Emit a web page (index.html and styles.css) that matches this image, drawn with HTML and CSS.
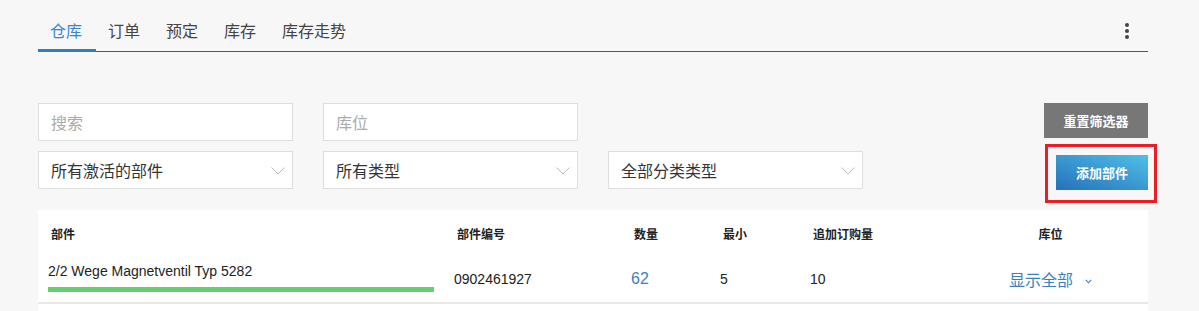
FILE: index.html
```html
<!DOCTYPE html>
<html lang="zh">
<head>
<meta charset="utf-8">
<title>仓库</title>
<link rel="stylesheet" href="styles.css">
</head>
<body>
<div class="page">
  <nav class="tabs">
    <a class="tab active">仓库</a>
    <a class="tab">订单</a>
    <a class="tab">预定</a>
    <a class="tab">库存</a>
    <a class="tab">库存走势</a>
    <span class="kebab"><i></i><i></i><i></i></span>
  </nav>

  <div class="filters">
    <div class="field"><span class="placeholder">搜索</span></div>
    <div class="field"><span class="placeholder">库位</span></div>
    <div class="spacer"></div>
    <button class="btn btn-gray">重置筛选器</button>

    <div class="field select"><span>所有激活的部件</span>
      <svg class="chev" width="14" height="8" viewBox="0 0 14 8"><polyline points="0.5,0.5 7,7 13.5,0.5" fill="none" stroke="#bdbdbd" stroke-width="1"/></svg>
    </div>
    <div class="field select"><span>所有类型</span>
      <svg class="chev" width="14" height="8" viewBox="0 0 14 8"><polyline points="0.5,0.5 7,7 13.5,0.5" fill="none" stroke="#bdbdbd" stroke-width="1"/></svg>
    </div>
    <div class="field select"><span>全部分类类型</span>
      <svg class="chev" width="14" height="8" viewBox="0 0 14 8"><polyline points="0.5,0.5 7,7 13.5,0.5" fill="none" stroke="#bdbdbd" stroke-width="1"/></svg>
    </div>
    <div class="add-wrap">
      <button class="btn btn-blue">添加部件</button>
      <span class="highlight"></span>
    </div>
  </div>

  <div class="table">
    <div class="row head">
      <div class="cell">部件</div>
      <div class="cell">部件编号</div>
      <div class="cell">数量</div>
      <div class="cell">最小</div>
      <div class="cell">追加订购量</div>
      <div class="cell center">库位</div>
    </div>
    <div class="row data">
      <div class="cell name">
        <div class="part-name">2/2 Wege Magnetventil Typ 5282</div>
        <div class="bar"></div>
      </div>
      <div class="cell">0902461927</div>
      <div class="cell qty">62</div>
      <div class="cell">5</div>
      <div class="cell">10</div>
      <div class="cell center"><span class="show-all">显示全部</span><svg class="small-chev" width="7" height="5" viewBox="0 0 7 5"><polyline points="0.8,0.8 3.5,3.8 6.2,0.8" fill="none" stroke="#3a7fc1" stroke-width="1.1"/></svg></div>
    </div>
    <div class="row data empty"></div>
  </div>
</div>
</body>
</html>
```

FILE: styles.css
```css
* { box-sizing: border-box; }
html, body { margin: 0; padding: 0; }
body {
  background: #f7f7f7;
  font-family: "Liberation Sans", "Noto Sans CJK SC", sans-serif;
  color: #333;
}
.page {
  width: 1110px;
  margin-left: 38px;
}

/* tabs */
.tabs {
  display: flex;
  align-items: flex-start;
  padding-top: 10px;
  border-bottom: 1px solid #555;
  height: 52px;
}
.tab {
  font-family: "Noto Sans CJK SC", sans-serif;
  font-size: 16px;
  line-height: 20px;
  color: #444;
  padding: 10px 14px 9px 12px;
  border-bottom: 3px solid transparent;
  height: 42px;
}
.tab.active {
  color: #3b86c8;
  border-bottom-color: #2f80c2;
}
.kebab {
  margin-left: auto;
  margin-right: 19px;
  margin-top: 13px;
  display: flex;
  flex-direction: column;
  gap: 2px;
}
.kebab i {
  display: block;
  width: 4px;
  height: 4px;
  border-radius: 50%;
  background: #444;
}

/* filters */
.filters {
  margin-top: 51px;
  display: grid;
  grid-template-columns: 255px 255px 255px 1fr;
  column-gap: 30px;
  row-gap: 10px;
}
.field {
  height: 38px;
  background: #fff;
  border: 1px solid #dedede;
  display: flex;
  align-items: center;
  padding: 0 7px 0 12px;
  font-family: "Noto Sans CJK SC", sans-serif;
  font-size: 16px;
  color: #333;
}
.placeholder { color: #ababab; }
.select { justify-content: space-between; }
.chev { display: block; margin-top: 1px; }

.btn {
  border: 0;
  font-family: "Noto Sans CJK SC", sans-serif;
  font-weight: bold;
  font-size: 13px;
  color: #fff;
  height: 35px;
  padding: 0;
  cursor: pointer;
}
.btn-gray {
  justify-self: end;
  width: 104px;
  background: #777;
}
.add-wrap {
  justify-self: end;
  position: relative;
  margin-top: 4px;
  width: 92px;
  height: 35px;
}
.btn-blue {
  width: 92px;
  background: linear-gradient(to top right, #2670b9, #4fc0e6);
}
.highlight {
  position: absolute;
  left: -11px;
  top: -11px;
  width: 112px;
  height: 59px;
  border: 3px solid #ec1c24;
  pointer-events: none;
}

/* table */
.table {
  margin-top: 20px;
  background: #fff;
}
.row {
  display: grid;
  grid-template-columns: 406px 177px 89px 90px 153px 195px;
  align-items: center;
}
.head {
  height: 46px;
}
.head .cell {
  padding-left: 13px;
  font-family: "Noto Sans CJK SC", sans-serif;
  font-weight: bold;
  font-size: 12px;
  color: #222;
}
.head .cell.center, .data .cell.center {
  padding-left: 0;
  text-align: center;
}
.data {
  height: 48px;
  border-bottom: 2px solid #e8e8e8;
}
.data .cell {
  padding-left: 10px;
  font-size: 14px;
  color: #222;
}
.data .cell.name {
  padding-right: 10px;
  align-self: start;
  padding-top: 6px;
}
.part-name {
  line-height: 18px;
}
.bar {
  margin-top: 7px;
  height: 5px;
  background: #63d16a;
}
.qty {
  font-size: 16px !important;
  color: #3a7fc1 !important;
}
.show-all {
  font-family: "Noto Sans CJK SC", sans-serif;
  font-size: 16px;
  color: #3a7fc1;
}
.small-chev {
  margin-left: 12px;
  vertical-align: 2px;
}
.empty {
  border-bottom: 0;
}
```
